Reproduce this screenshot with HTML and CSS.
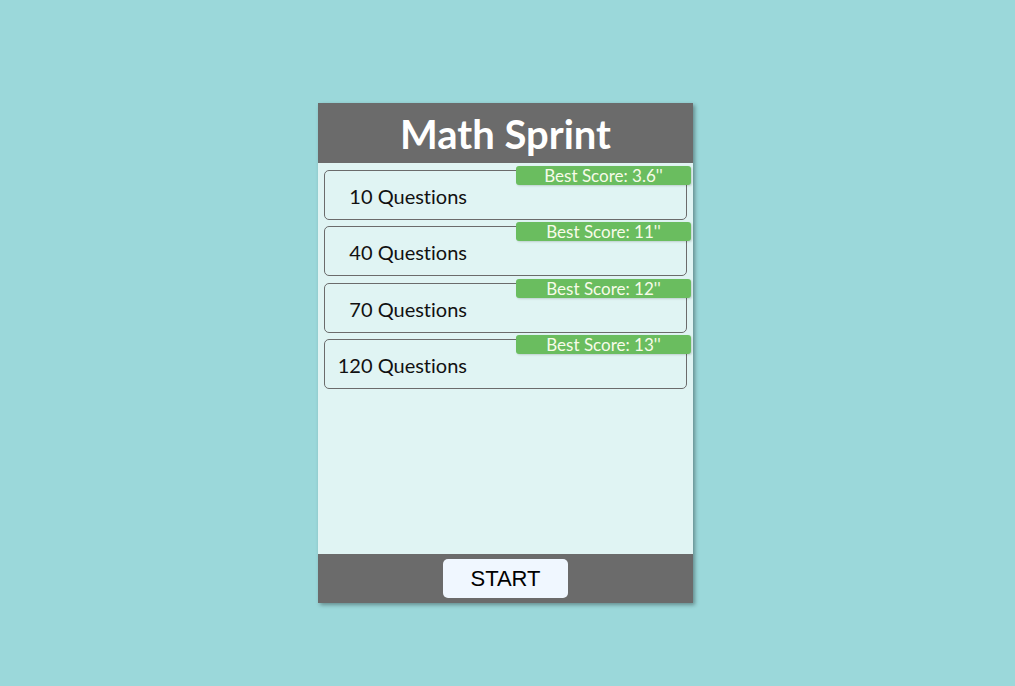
FILE: index.html
```html
<!DOCTYPE html>
<html>
<head>
<meta charset="utf-8">
<link rel="stylesheet" href="styles.css">
</head>
<body>
<div class="page">
  <div class="card">
    <header class="header"><h1 class="title">Math Sprint</h1></header>
    <main class="body">
      <div class="item"><span class="label">10 Questions</span><span class="badge">Best Score: 3.6''</span></div>
      <div class="item"><span class="label">40 Questions</span><span class="badge">Best Score: 11''</span></div>
      <div class="item"><span class="label">70 Questions</span><span class="badge">Best Score: 12''</span></div>
      <div class="item"><span class="label">120 Questions</span><span class="badge">Best Score: 13''</span></div>
    </main>
    <footer class="footer"><button class="start">START</button></footer>
  </div>
</div>
</body>
</html>
```
FILE: styles.css
```css
html, body { margin: 0; padding: 0; }
body {
  background: #9bd8da;
  font-family: Lato, "Liberation Sans", sans-serif;
  font-variant-ligatures: none;
  width: 1015px;
  height: 686px;
  overflow: hidden;
}
.page { padding-top: 103px; }
.card {
  width: 375px;
  height: 500px;
  margin-left: 318px;
  background: #e0f4f3;
  display: flex;
  flex-direction: column;
  box-shadow: 2px 2px 4px rgba(0,0,0,0.35);
}
.header {
  height: 60px;
  background: #6b6b6b;
  display: flex;
  align-items: center;
  justify-content: center;
}
.title {
  margin: 0;
  color: #fff;
  font-family: Lato, sans-serif;
  font-weight: 700;
  font-size: 40px;
  line-height: 1;
  padding-top: 2px;
}
.body {
  flex: 1;
  padding: 7px 6px 0 6px;
  display: flex;
  flex-direction: column;
  gap: 6.3px;
}
.item {
  position: relative;
  height: 48px;
  border: 1px solid #6b6b6b;
  border-radius: 5px;
  display: flex;
  align-items: center;
}
.label {
  width: 142px;
  text-align: right;
  font-size: 20px;
  color: #111;
  padding-top: 2px;
}
.badge {
  position: absolute;
  top: -5px;
  right: -5px;
  width: 175px;
  height: 19px;
  background: #6abd5f;
  color: #f7fbe9;
  font-size: 17px;
  line-height: 19px;
  text-align: center;
  border-radius: 3px;
  box-shadow: 1px 1px 2px rgba(0,0,0,0.15);
}
.footer {
  height: 49px;
  background: #6b6b6b;
  display: flex;
  align-items: center;
  justify-content: center;
}
.start {
  width: 125px;
  height: 39px;
  border: none;
  border-radius: 5px;
  background: #f0f7ff;
  font-family: "Liberation Sans", Arial, sans-serif;
  font-size: 22px;
  color: #000;
  padding: 0;
  margin-left: 0;
}
```
